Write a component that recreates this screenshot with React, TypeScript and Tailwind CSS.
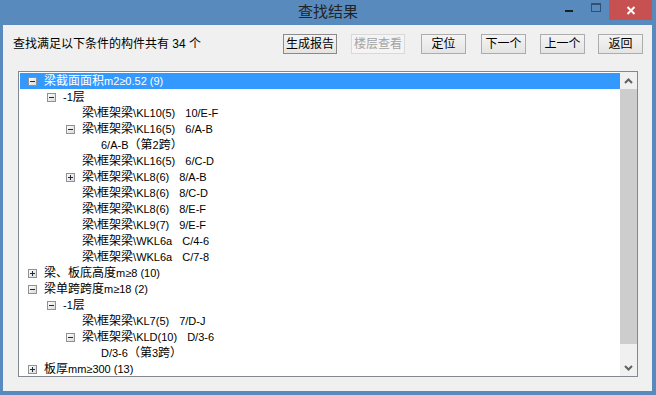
import React from 'react';

type Row = { level: number; exp?: '+' | '-'; text: string; loc?: string; sel?: boolean };

const rows: Row[] = [
  { level: 0, exp: '-', text: '梁截面面积m2≥0.52 (9)', sel: true },
  { level: 1, exp: '-', text: '-1层' },
  { level: 2, text: '梁\\框架梁\\KL10(5)', loc: '10/E-F' },
  { level: 2, exp: '-', text: '梁\\框架梁\\KL16(5)', loc: '6/A-B' },
  { level: 3, text: '6/A-B（第2跨）' },
  { level: 2, text: '梁\\框架梁\\KL16(5)', loc: '6/C-D' },
  { level: 2, exp: '+', text: '梁\\框架梁\\KL8(6)', loc: '8/A-B' },
  { level: 2, text: '梁\\框架梁\\KL8(6)', loc: '8/C-D' },
  { level: 2, text: '梁\\框架梁\\KL8(6)', loc: '8/E-F' },
  { level: 2, text: '梁\\框架梁\\KL9(7)', loc: '9/E-F' },
  { level: 2, text: '梁\\框架梁\\WKL6a', loc: 'C/4-6' },
  { level: 2, text: '梁\\框架梁\\WKL6a', loc: 'C/7-8' },
  { level: 0, exp: '+', text: '梁、板底高度m≥8 (10)' },
  { level: 0, exp: '-', text: '梁单跨跨度m≥18 (2)' },
  { level: 1, exp: '-', text: '-1层' },
  { level: 2, text: '梁\\框架梁\\KL7(5)', loc: '7/D-J' },
  { level: 2, exp: '-', text: '梁\\框架梁\\KLD(10)', loc: 'D/3-6' },
  { level: 3, text: 'D/3-6（第3跨）' },
  { level: 0, exp: '+', text: '板厚mm≥300 (13)' },
];

const indent = ['pl-[8px]', 'pl-[27px]', 'pl-[46px]', 'pl-[65px]'];

const CJK = /([\u3000-\u303f\u4e00-\u9fff\uff00-\uffef]+)/;

function Txt({ s }: { s: string }) {
  const parts = s.split(CJK).filter((p) => p.length > 0);
  return (
    <>
      {parts.map((p, i) =>
        CJK.test(p) ? (
          <span key={i} className="text-[12px]">{p}</span>
        ) : (
          <span key={i} className="text-[11px]">{p}</span>
        )
      )}
    </>
  );
}

function Expander({ kind }: { kind: '+' | '-' }) {
  return (
    <svg width="9" height="9" viewBox="0 0 9 9" className="block">
      <defs>
        <linearGradient id="eg" x1="0" y1="0" x2="1" y2="1">
          <stop offset="0" stopColor="#ffffff" />
          <stop offset="1" stopColor="#d8d8d8" />
        </linearGradient>
      </defs>
      <rect x="0.5" y="0.5" width="8" height="8" fill="url(#eg)" stroke="#919191" />
      <rect x="2" y="4" width="5" height="1" fill="#1c2b3c" />
      {kind === '+' && <rect x="4" y="2" width="1" height="5" fill="#1c2b3c" />}
    </svg>
  );
}

function Btn({ label, w, disabled, focused, ml }: { label: string; w: string; disabled?: boolean; focused?: boolean; ml: string }) {
  const base = 'h-[20px] flex items-center justify-center text-[12px] leading-none';
  if (disabled)
    return <div className={`${base} ${w} ${ml} border border-[#d9d9d9] bg-[#f4f4f4] text-[#a3a3a3]`}>{label}</div>;
  return (
    <div
      className={`${base} ${w} ${ml} border ${focused ? 'border-[#8a8a8a]' : 'border-[#acacac]'} bg-gradient-to-b from-[#f4f4f4] to-[#e4e4e4] text-black`}
    >
      {label}
    </div>
  );
}

export default function App() {
  return (
    <div className="w-[656px] h-[395px] bg-[#598abe] flex flex-col font-['Liberation_Sans','Noto_Sans_CJK_SC',sans-serif] overflow-hidden">
      {/* title bar */}
      <div className="h-[25px] grid grid-cols-[1fr_auto_1fr]">
        <div />
        <div className="h-[22px] leading-[22px] text-[15px] text-[#232323] font-['Noto_Sans_CJK_SC',sans-serif]">查找结果</div>
        <div className="flex justify-end items-start pr-[4px]">
          <div className="w-[26px] h-[20px] flex justify-center">
            <div className="mt-[10px] w-[8px] h-[2px] bg-[#1e1e1e]" />
          </div>
          <div className="w-[27px] h-[20px] flex justify-center">
            <div className="mt-[3px] w-[10px] h-[9px] border border-t-2 border-[#34506f]" />
          </div>
          <div className="w-[43px] h-[20px] bg-[#c75050] flex items-center justify-center">
            <svg width="10" height="9" viewBox="0 0 10 9">
              <path d="M1.5 1 L8.5 8 M8.5 1 L1.5 8" stroke="#ffffff" strokeWidth="2" />
            </svg>
          </div>
        </div>
      </div>

      {/* client */}
      <div className="flex-1 ml-[3px] mr-[4px] mb-[4px] bg-[#f0f0f0] flex flex-col">
        <div className="mt-[9px] h-[20px] flex items-center pl-[10px] pr-[9px]">
          <div className="text-[12px] text-black whitespace-pre">查找满足以下条件的构件共有 34 个</div>
          <div className="ml-auto flex">
            <Btn label="生成报告" w="w-[54px]" focused ml="ml-0" />
            <Btn label="楼层查看" w="w-[54px]" disabled ml="ml-[14px]" />
            <Btn label="定位" w="w-[45px]" ml="ml-[16px]" />
            <Btn label="下一个" w="w-[45px]" ml="ml-[15px]" />
            <Btn label="上一个" w="w-[45px]" ml="ml-[14px]" />
            <Btn label="返回" w="w-[45px]" ml="ml-[13px]" />
          </div>
        </div>

        <div className="mt-[17px] ml-[15px] w-[620px] h-[306px] border border-[#828790] bg-white flex">
          <div className="flex-1 pt-[1px] pl-[1px] overflow-hidden">
            {rows.map((r, i) => (
              <div
                key={i}
                className={`h-[16px] flex items-center whitespace-pre ${indent[r.level]} ${r.sel ? 'bg-[#3399ff] text-white' : 'text-black'}`}
              >
                <div className="w-[9px] h-[9px] shrink-0">{r.exp && <Expander kind={r.exp} />}</div>
                <div className="ml-[7px] flex items-center leading-[16px]">
                  <Txt s={r.text} />
                  {r.loc && (
                    <span className="ml-[10px] text-[11px]">{r.loc}</span>
                  )}
                </div>
              </div>
            ))}
          </div>
          <div className="w-[17px] bg-[#f0f0f0] flex flex-col">
            <div className="h-[17px] flex items-center justify-center">
              <svg width="9" height="6" viewBox="0 0 9 6">
                <path d="M1 5 L4.5 1.5 L8 5" fill="none" stroke="#606060" strokeWidth="2" />
              </svg>
            </div>
            <div className="h-[255px] bg-[#cdcdcd]" />
            <div className="flex-1" />
            <div className="h-[17px] flex items-center justify-center">
              <svg width="9" height="6" viewBox="0 0 9 6">
                <path d="M1 1 L4.5 4.5 L8 1" fill="none" stroke="#606060" strokeWidth="2" />
              </svg>
            </div>
          </div>
        </div>
      </div>
    </div>
  );
}
